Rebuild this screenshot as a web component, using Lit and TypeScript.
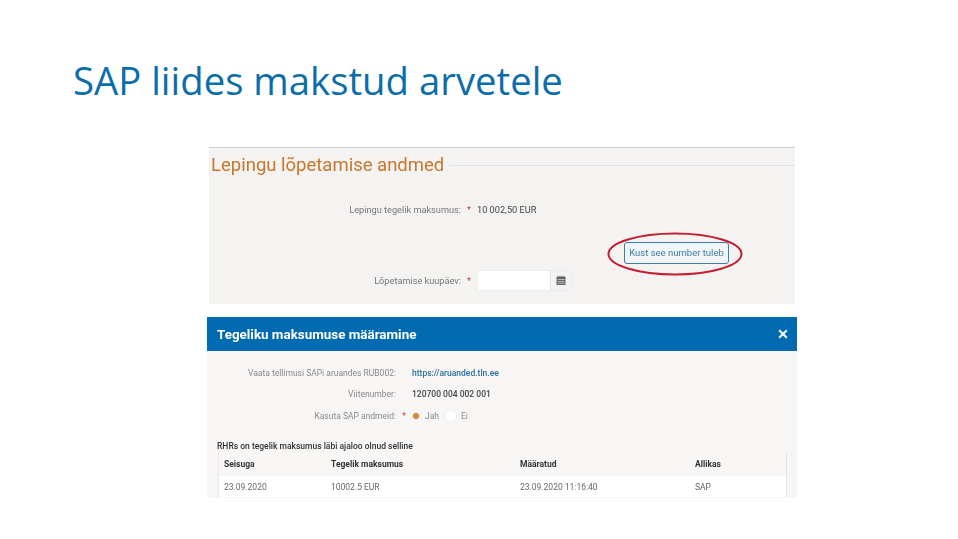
import { LitElement, html, css } from "lit";
import { customElement } from "lit/decorators.js";

@customElement("app-root")
export class AppRoot extends LitElement {
  static styles = css`
    :host { display: block; width: 958px; height: 539px; background: #fff; overflow: hidden; font-family: Roboto, "Liberation Sans", sans-serif; }
    .title { margin: 0; padding: 55px 0 0 73px; height: 147px; box-sizing: border-box; font: 400 38.3px/50px "Open Sans", sans-serif; color: #0b6eab; white-space: nowrap; }

    .contract { margin-left: 209px; width: 586px; height: 157px; box-sizing: border-box; background: #f4f3f2; border-top: 1px solid #cfd0d0; position: relative; }
    .heading { display: flex; align-items: center; gap: 5px; height: 34px; padding-left: 2px; }
    .heading span { font-size: 18.5px; color: #c8772c; filter: blur(0.35px); white-space: nowrap; }
    .heading i { flex: 1; height: 1px; background: #e2e2e2; }

    .row { display: grid; grid-template-columns: 252px 16px auto; align-items: center; font-size: 9.2px; color: #777; filter: blur(0.45px); }
    .row .star { color: #c0404a; text-align: center; }
    .row .lab { text-align: right; white-space: nowrap; }
    .row .val { color: #444; white-space: nowrap; }
    .r1 { height: 20px; margin-top: 17px; }
    .btnrow { display: flex; justify-content: flex-end; padding-right: 66px; margin-top: 23px; }
    .btn { width: 105px; height: 22px; box-sizing: border-box; border: 1px solid #3a7fa6; border-radius: 3px; background: #f2f5f7; color: #3d7fa5; font-size: 9.5px; line-height: 20px; text-align: center; filter: blur(0.35px); white-space: nowrap; }
    .r3 { height: 22px; margin-top: 5px; }
    .date { display: flex; width: 95px; height: 21px; box-sizing: border-box; background: #fff; border: 1px solid #ececec; border-radius: 2px; }
    .date b { flex: 1; }
    .date em { width: 20px; display: flex; align-items: center; justify-content: center; background: #f4f3f2; border-left: 1px solid #e2e2e2; }
    .ellipse { position: absolute; left: 398px; top: 83px; }

    .modal { margin: 13px 0 0 207px; width: 590px; height: 181px; background: #f8f6f5; overflow: hidden; }
    .mhead { height: 34px; background: #006bb0; display: flex; align-items: center; justify-content: space-between; padding: 0 9px 0 10px; color: #fff; }
    .mhead span { font-size: 13.4px; font-weight: 700; filter: blur(0.3px); white-space: nowrap; }
    .form { padding-top: 11px; display: grid; grid-auto-rows: 21.5px; }
    .mrow { display: grid; grid-template-columns: 189px 16px auto; align-items: center; font-size: 8.5px; color: #8a8a8a; filter: blur(0.5px); }
    .mrow .lab { text-align: right; white-space: nowrap; }
    .mrow .star { color: #c0404a; text-align: center; }
    .link { color: #2a6f9e; font-weight: 500; }
    .bold { color: #444; font-weight: 500; }
    .radios { display: flex; align-items: center; gap: 5px; color: #888; }
    .on { width: 8px; height: 8px; border-radius: 50%; background: #c98a3c; border: 1px solid #f0e6d8; box-sizing: border-box; }
    .off { width: 12px; height: 12px; border-radius: 50%; background: #fff; border: 1px solid #eee; box-sizing: border-box; margin-left: 1px; margin-right: -1px; }
    .hist { margin: 14px 0 0 10px; height: 11px; font-size: 8.5px; line-height: 11px; color: #333; font-weight: 500; filter: blur(0.4px); white-space: nowrap; }
    .table { margin: 1px 10px 0 11px; height: 44px; overflow: hidden; background: #fff; border-right: 1px solid #e4e4e4; border-left: 1px solid #e9e9e9; filter: blur(0.4px); }
    .tr { display: grid; grid-template-columns: 107px 189px 175px 1fr; padding-left: 5px; height: 23px; align-items: center; font-size: 8.5px; color: #666; }
    .tr.th { background: #f8f7f6; color: #333; font-weight: 700; }
  `;

  render() {
    return html`
      <h1 class="title">SAP liides makstud arvetele</h1>
      <section class="contract">
        <div class="heading"><span>Lepingu lõpetamise andmed</span><i></i></div>
        <div class="row r1"><span class="lab">Lepingu tegelik maksumus:</span><span class="star">*</span><span class="val">10 002,50 EUR</span></div>
        <div class="btnrow"><div class="btn">Kust see number tuleb</div></div>
        <div class="row r3"><span class="lab">Lõpetamise kuupäev:</span><span class="star">*</span>
          <div class="date"><b></b><em>
            <svg width="10" height="10" viewBox="0 0 10 10"><path d="M0.5 2h9v8h-9z" fill="#666"/><path d="M2 .8v2M4 .8v2M6 .8v2M8 .8v2" stroke="#555" stroke-width="1"/><path d="M1.5 4.5h7M1.5 6.5h7M1.5 8.3h7" stroke="#ddd" stroke-width=".7"/></svg>
          </em></div>
        </div>
        <svg class="ellipse" width="136" height="46" viewBox="0 0 136 46"><ellipse cx="68" cy="23" rx="66.5" ry="20.5" fill="none" stroke="#c21f33" stroke-width="2"/></svg>
      </section>
      <section class="modal">
        <div class="mhead"><span>Tegeliku maksumuse määramine</span>
          <svg width="10" height="10" viewBox="0 0 10 10"><path d="M1.2 1.2l7.6 7.6M8.8 1.2l-7.6 7.6" stroke="#fff" stroke-width="2"/></svg>
        </div>
        <div class="form">
          <div class="mrow"><span class="lab">Vaata tellimusi SAPi aruandes RUB002:</span><span></span><span class="link">https://aruanded.tln.ee</span></div>
          <div class="mrow"><span class="lab">Viitenumber:</span><span></span><span class="bold">120700 004 002 001</span></div>
          <div class="mrow"><span class="lab">Kasuta SAP andmeid:</span><span class="star">*</span><span class="radios"><i class="on"></i>Jah<i class="off"></i>Ei</span></div>
        </div>
        <div class="hist">RHRs on tegelik maksumus läbi ajaloo olnud selline</div>
        <div class="table">
          <div class="tr th"><span>Seisuga</span><span>Tegelik maksumus</span><span>Määratud</span><span>Allikas</span></div>
          <div class="tr"><span>23.09.2020</span><span>10002.5 EUR</span><span>23.09.2020 11:16:40</span><span>SAP</span></div>
        </div>
      </section>
    `;
  }
}
